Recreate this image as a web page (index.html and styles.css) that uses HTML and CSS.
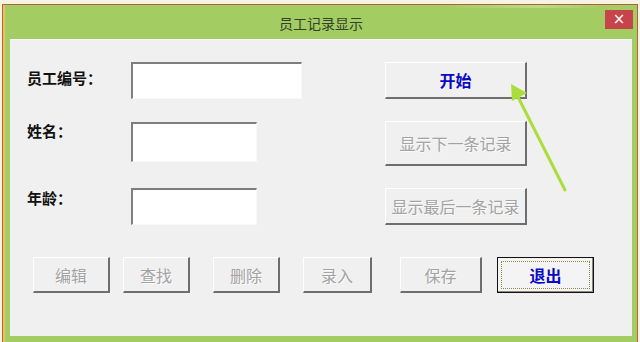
FILE: index.html
```html
<!DOCTYPE html>
<html lang="zh-CN">
<head>
    <meta charset="UTF-8">
    <meta name="viewport" content="width=device-width, initial-scale=1.0">
    <title>员工记录显示</title>
    <link rel="stylesheet" href="styles.css">
</head>
<body>
    <div class="window">
        <!-- Barre de titre -->
        <div class="titlebar">
            <span class="title">员工记录显示</span>
            <span class="close">×</span>
        </div>

        <div class="client">
            <div class="form">
                <div class="label first">员工编号：</div>
                <div class="field wide"></div>
                <button class="button primary">开始</button>

                <div class="label">姓名：</div>
                <div class="field tall"></div>
                <button class="button disabled tall">显示下一条记录</button>

                <div class="label">年龄：</div>
                <div class="field"></div>
                <button class="button disabled">显示最后一条记录</button>
            </div>

            <div class="actions">
                <button class="button disabled b-edit">编辑</button>
                <button class="button disabled b-find">查找</button>
                <button class="button disabled b-del">删除</button>
                <button class="button disabled b-add">录入</button>
                <button class="button disabled b-save">保存</button>
                <button class="button primary focused b-quit"><span class="focus">退出</span></button>
            </div>
        </div>
    </div>

    <!-- Flèche d'annotation -->
    <svg class="arrow" width="640" height="342" viewBox="0 0 640 342">
        <line x1="565" y1="190" x2="515" y2="91" stroke="#a9de3c" stroke-width="3" stroke-linecap="round"/>
        <polygon points="511,84 512,101 527,93" fill="#a9de3c"/>
    </svg>
</body>
</html>
```

FILE: styles.css
```css
body {
    margin: 0;
    width: 640px;
    height: 342px;
    overflow: hidden;
    background-color: #f7f2e4;
    font-family: "Noto Sans CJK SC", "Liberation Sans", sans-serif;
    position: relative;
}

.window {
    margin: 4px 2px 0 2px;
    border: 1px solid #b4603c;
    border-bottom: none;
    background-color: #a3cd62;
    padding: 0 5px 6px 7px;
    box-shadow: inset 2px 0 #e9c45c;
}

.titlebar {
    height: 34px;
    display: flex;
    align-items: center;
    justify-content: center;
    position: relative;
    background: linear-gradient(to right, #a3cd62 70%, #b9dc84 85%, #a3cd62 95%) top / 100% 3px no-repeat;
}

.title {
    font-size: 14px;
    color: #33402a;
    margin-top: 2px;
}

.close {
    position: absolute;
    right: -1px;
    top: 5px;
    width: 28px;
    height: 19px;
    background-color: #c7444b;
    color: #fff;
    font-size: 15px;
    line-height: 18px;
    text-align: center;
    font-family: "DejaVu Sans", sans-serif;
}

.client {
    height: 297px;
    background-color: #f0f0f0;
    border-top: 1px solid #fbfbfb;
    box-sizing: border-box;
}

.form {
    display: grid;
    grid-template-columns: 104px 254px 142px;
    grid-template-rows: 37px 45px 38px;
    row-gap: 22px;
    padding: 22px 0 0 17px;
}

.label {
    align-self: start;
    padding-top: 2px;
    font-size: 15px;
    line-height: 15px;
    font-weight: bold;
    color: #111;
}

    .label.first {
        padding-top: 8px;
    }

.field {
    width: 126px;
    height: 37px;
    box-sizing: border-box;
    background-color: #fff;
    border-top: 2px solid #7e7e7e;
    border-left: 2px solid #7e7e7e;
    border-right: 1px solid #f8f8f8;
    border-bottom: 1px solid #f8f8f8;
}

    .field.wide {
        width: 171px;
    }

    .field.tall {
        height: 40px;
        margin-top: 1px;
    }

.button {
    box-sizing: border-box;
    width: 142px;
    height: 37px;
    padding: 0;
    background-color: #f0f0f0;
    border-top: 1px solid #fff;
    border-left: 1px solid #fff;
    border-right: 2px solid #6e6e6e;
    border-bottom: 2px solid #6e6e6e;
    font-family: "Noto Sans CJK SC", sans-serif;
    font-size: 16px;
}

    .button.tall {
        height: 45px;
    }

    .button.primary {
        color: #0a0ac4;
        font-weight: bold;
    }

    .button.disabled {
        color: #a3a3a3;
        text-shadow: 1px 1px #fbfbfb;
    }

.actions {
    display: flex;
    padding-left: 23px;
    margin-top: 31px;
}

    .actions .button {
        height: 36px;
    }

.b-edit { width: 77px; margin-right: 13px; }
.b-find { width: 67px; margin-right: 23px; }
.b-del { width: 67px; margin-right: 23px; }
.b-add { width: 69px; margin-right: 28px; }
.b-save { width: 82px; margin-right: 15px; }
.b-quit { width: 97px; }

.button.focused {
    border: 1px solid #111;
    padding: 3px;
    background-color: #f4f4f4;
    box-shadow: inset -1px -1px #8a8a8a;
}

.focus {
    display: flex;
    align-items: center;
    justify-content: center;
    height: 100%;
    border: 1px dotted #8c8a40;
    box-sizing: border-box;
}

.arrow {
    position: absolute;
    left: 0;
    top: 0;
    pointer-events: none;
}
```
